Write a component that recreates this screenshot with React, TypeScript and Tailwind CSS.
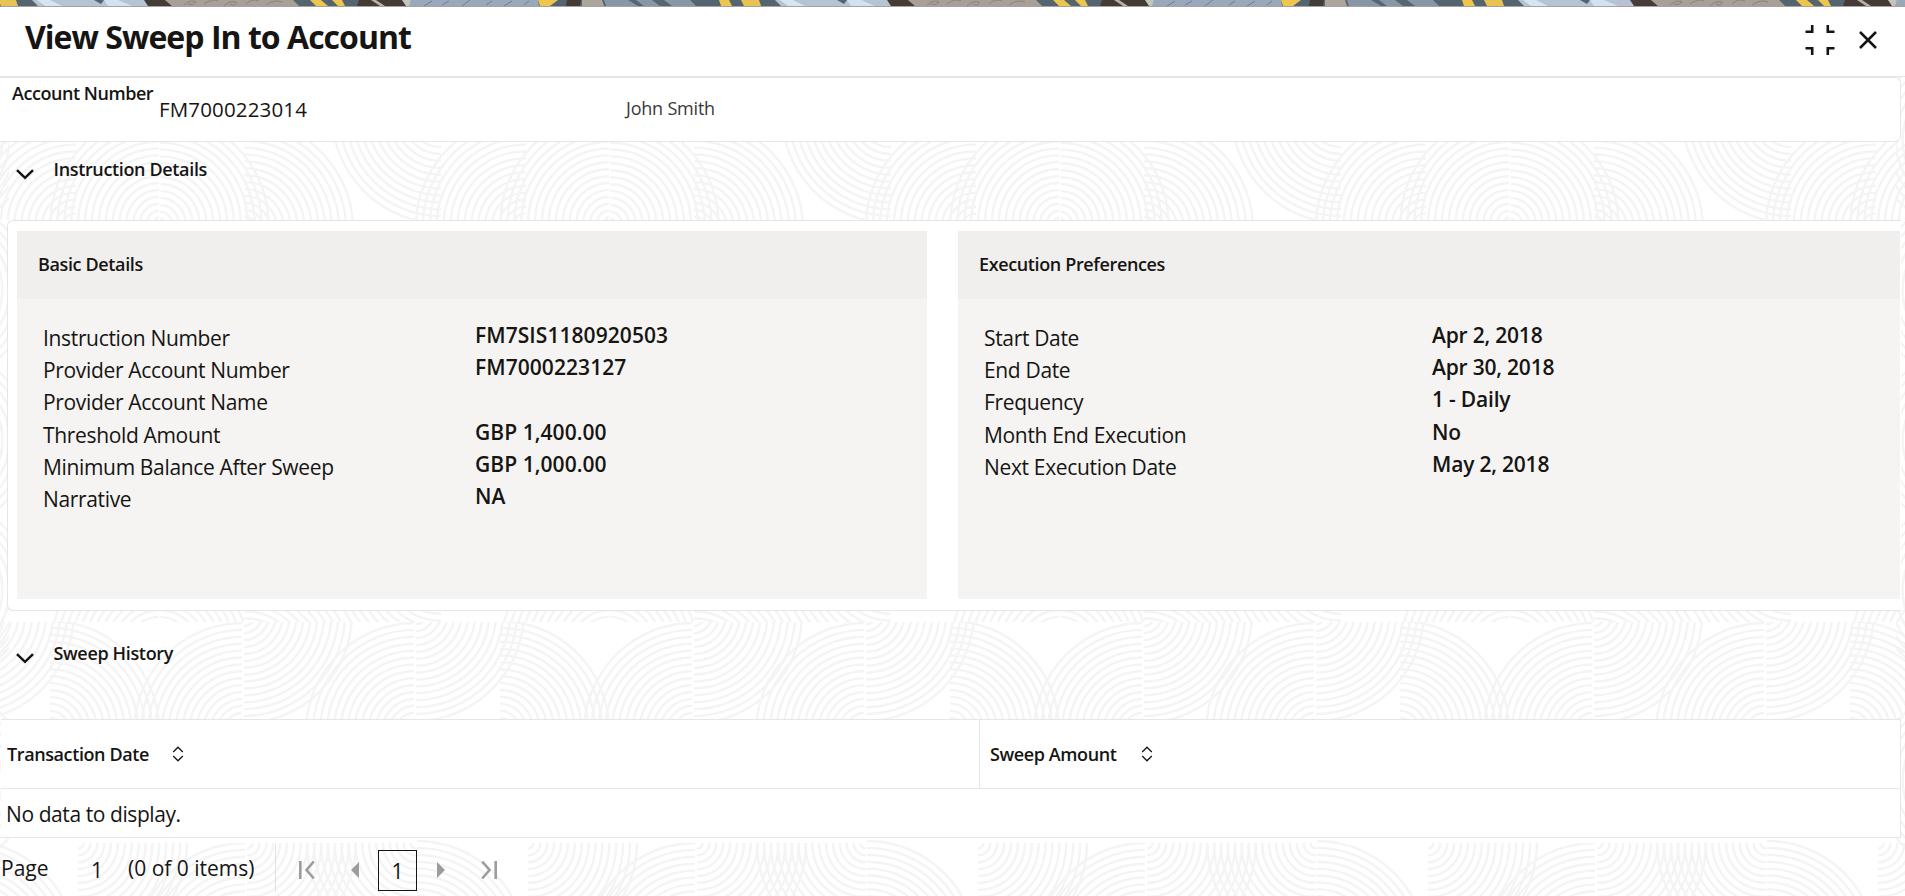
import type { ReactNode } from 'react'

interface Detail {
  label: string
  value: string
}

const basicDetails: Detail[] = [
  { label: 'Instruction Number', value: 'FM7SIS1180920503' },
  { label: 'Provider Account Number', value: 'FM7000223127' },
  { label: 'Provider Account Name', value: '' },
  { label: 'Threshold Amount', value: 'GBP 1,400.00' },
  { label: 'Minimum Balance After Sweep', value: 'GBP 1,000.00' },
  { label: 'Narrative', value: 'NA' },
]

const executionPreferences: Detail[] = [
  { label: 'Start Date', value: 'Apr 2, 2018' },
  { label: 'End Date', value: 'Apr 30, 2018' },
  { label: 'Frequency', value: '1 - Daily' },
  { label: 'Month End Execution', value: 'No' },
  { label: 'Next Execution Date', value: 'May 2, 2018' },
]

interface RingProps {
  x: number
  y: number
  w: number
  h: number
  cx: number
  cy: number
  r?: number
}

// Concentric rings cut to one cell of the backdrop
function Rings({ x, y, w, h, cx, cy, r = 109 }: RingProps) {
  const radii: number[] = []
  for (let i = r; i > 3; i -= 6.9) radii.push(i)
  return (
    <svg x={x} y={y} width={w} height={h} viewBox={`${x} ${y} ${w} ${h}`}>
      {radii.map((radius) => (
        <circle key={radius} cx={cx} cy={cy} r={radius} />
      ))}
    </svg>
  )
}

const TILES = [-450, 0, 450, 900, 1350, 1800]

function Backdrop() {
  return (
    <svg
      className="absolute inset-0 -z-10"
      width="1905"
      height="896"
      fill="none"
      stroke="#f4f4f4"
      strokeWidth="2.4"
    >
      {TILES.map((t) => (
        <g key={t}>
          {/* arches */}
          <Rings x={t + 48} y={142} w={111} h={78} cx={t + 159.5} cy={223} />
          <Rings x={t + 160.5} y={142} w={111} h={78} cx={t + 159.5} cy={224} />
          <Rings x={t - 36} y={142} w={112} h={78} cx={t + 75} cy={226} />
          <Rings x={t + 244} y={142} w={111} h={78} cx={t + 244} cy={229} />
          <Rings x={t + 330} y={142} w={111} h={78} cx={t + 441} cy={114} />
          {/* band above the second seam */}
          <Rings x={t + 48} y={610} w={111} h={12} cx={t + 159.5} cy={650} />
          <Rings x={t + 160.5} y={610} w={84} h={12} cx={t + 159.5} cy={650} />
          <Rings x={t + 244} y={610} w={111} h={12} cx={t + 244} cy={672} />
          <Rings x={t + 330} y={610} w={111} h={12} cx={t + 441} cy={560} />
          {/* waves */}
          <Rings x={t + 132} y={622} w={110} h={97} cx={t + 243} cy={732} />
          <Rings x={t + 244} y={622} w={111} h={97} cx={t + 243} cy={614} />
          <Rings x={t + 304} y={622} w={110} h={97} cx={t + 415} cy={732} />
          <Rings x={t + 416} y={622} w={111} h={97} cx={t + 415} cy={612} />
          <Rings x={t + 500} y={622} w={111} h={97} cx={t + 500} cy={730} />
          {/* bottom row */}
          <Rings x={t + 247} y={843} w={112} h={53} cx={t + 247} cy={843} />
          <Rings x={t + 306} y={843} w={110} h={53} cx={t + 416} cy={843} />
          <Rings x={t + 417} y={840} w={110} h={56} cx={t + 417} cy={950} />
          <Rings x={t + 528} y={843} w={110} h={53} cx={t + 528} cy={843} />
          <Rings x={t + 585} y={843} w={110} h={53} cx={t + 695} cy={952} />
        </g>
      ))}
      {/* gutters */}
      {[140, 290, 440, 590, 780].map((cy) => (
        <g key={cy}>
          <Rings x={0} y={cy - 70} w={9} h={140} cx={-60} cy={cy} r={90} />
          <Rings x={1896} y={cy - 70} w={9} h={140} cx={1965} cy={cy} r={90} />
        </g>
      ))}
    </svg>
  )
}

interface Shard {
  color: string
  points: string
}

const shards: Shard[] = [
  { color: '#e9c254', points: '-2,0 16,0 18,6 1,6' },
  { color: '#b7c3d3', points: '32,0 146,0 152,6 38,6' },
  { color: '#d9e4f3', points: '37,0 50,0 62,6 45,6' },
  { color: '#54646e', points: '94,0 104,0 101,4' },
  { color: '#d5e1f3', points: '104,0 118,0 132,6 108,6' },
  { color: '#453c37', points: '144,0 165,0 172,6 148,6' },
  { color: '#a8a097', points: '165,0 293,0 299,6 172,6' },
  { color: '#edc64f', points: '310,0 321,0 328,6 316,6' },
  { color: '#edc64f', points: '332,0 342,0 345,6 338,6' },
  { color: '#443b36', points: '359,0 402,0 408,6 357,6' },
  { color: '#b9b0a6', points: '371,0 376,0 385,6 380,6' },
  { color: '#c4c6bd', points: '402,0 411,0 410,6 406,6' },
  { color: '#9aa8bc', points: '411,0 538,0 539,6 409,6' },
  { color: '#edc64f', points: '538,0 558,0 550,6 540,6' },
  { color: '#443b36', points: '567,0 581,0 580,6 566,6' },
  { color: '#ada59c', points: '582,0 602,0 604,6 582,6' },
  { color: '#8996a8', points: '604,0 690,0 696,6 606,6' },
  { color: '#566772', points: '628,0 636,0 644,6 638,6' },
  { color: '#566772', points: '652,0 664,0 672,6 660,6' },
  { color: '#edc64f', points: '719,0 729,0 732,6 721,6' },
]

function ArtStrip() {
  return (
    <svg className="block h-1.5 w-full shrink-0 bg-[#54656f]" viewBox="0 0 1905 6">
      {[0, 743, 1486].map((dx) => (
        <g key={dx} transform={`translate(${dx} 0)`}>
          {shards.map((s) => (
            <polygon key={s.points} fill={s.color} points={s.points} />
          ))}
          <path
            d="M184 5q7-6 12-3q-3 4-8 2M204 4q8-6 14-3M224 6q6-6 12-4q0 5-6 2M246 4q6-6 13-3M266 5q8-6 16-3"
            fill="none"
            stroke="#8a837c"
          />
          <path d="M424 6l8-5M442 5l7-4M462 6l8-6M486 5l6-4M504 6l8-5M524 5l5-4" stroke="#6f7f93" />
        </g>
      ))}
    </svg>
  )
}

function ChevronDown() {
  return (
    <svg width="18" height="11" viewBox="0 0 18 11" fill="none" stroke="#161513" strokeWidth="2.5">
      <path d="M1 1.200l8 7.600l8-7.600" />
    </svg>
  )
}

function SortIcon() {
  return (
    <svg width="12" height="16" viewBox="0 0 12 16" fill="none" stroke="#161513" strokeWidth="1.3">
      <path d="M1.200 6L6 1.200L10.800 6M1.200 10L6 14.800L10.800 10" />
    </svg>
  )
}

interface PanelProps {
  title: string
  width: string
  labelWidth: string
  valueClass: string
  items: Detail[]
}

function Panel({ title, width, labelWidth, valueClass, items }: PanelProps) {
  return (
    <div className={`bg-[#f5f4f2] ${width}`}>
      <h3 className="h-[68px] bg-[#f0efed] pl-[21px] text-[18px] leading-[66px] font-semibold tracking-[-0.37px]">
        {title}
      </h3>
      <dl className="pt-[23px] pl-[26px]">
        {items.map((item) => (
          <div key={item.label} className="flex h-[32.2px]">
            <dt className={`text-[21px] leading-[32px] tracking-[-0.34px] ${labelWidth}`}>{item.label}</dt>
            <dd className={`text-[21px] leading-[26px] font-semibold ${valueClass}`}>{item.value}</dd>
          </div>
        ))}
      </dl>
    </div>
  )
}

function SectionTitle({ children, className }: { children: ReactNode; className: string }) {
  return (
    <div className={`flex shrink-0 items-start pl-[15.500px] ${className}`}>
      <div className="pt-[12px]">
        <ChevronDown />
      </div>
      <h2 className="pl-[20px] text-[18px] leading-6 font-semibold tracking-[-0.35px]">{children}</h2>
    </div>
  )
}

export default function App() {
  return (
    <div className="relative isolate flex h-[896px] w-[1905px] flex-col overflow-hidden bg-white font-['Open_Sans','Noto_Sans',sans-serif] text-[#161513]">
      <Backdrop />
      <ArtStrip />

      <header className="flex h-[71px] shrink-0 justify-between border-t border-b border-t-[#a5a3a1] border-b-[#e6e6e5] bg-white pr-[28px] pl-[25px]">
        <h1 className="text-[32px] leading-[60px] font-bold tracking-[-0.97px]">View Sweep In to Account</h1>
        <div className="flex items-start gap-[24px] pt-[18px]">
          <svg width="30" height="30" viewBox="0 0 30 30" fill="none" stroke="#161513" strokeWidth="2.6">
            <path d="M0.500 6.700H7.200V0M29.500 6.700H22.800V0M0.500 23.300H7.200V30M29.500 23.300H22.800V30" />
          </svg>
          <svg className="mt-[6px]" width="18" height="18" viewBox="0 0 18 18" fill="none" stroke="#161513" strokeWidth="2.5">
            <path d="M1 1l16 16M17 1L1 17" />
          </svg>
        </div>
      </header>

      <div className="flex h-[65px] w-[1901px] shrink-0 rounded-r-md border border-l-0 border-[#e6e6e5] bg-white pl-3">
        <div className="w-[147px] pt-[3px] text-[18px] leading-6 font-semibold tracking-[-0.45px]">Account Number</div>
        <div className="w-[467px] pt-[17px] text-[20.500px] leading-7 tracking-[0.15px]">FM7000223014</div>
        <div className="pt-[18px] text-[18px] leading-6 tracking-[-0.2px] text-[#3a3937]">John Smith</div>
      </div>

      <SectionTitle className="h-[78px] pt-[15px]">Instruction Details</SectionTitle>

      <section className="mr-[4px] ml-[7px] flex h-[391px] shrink-0 gap-[31px] rounded-l-md border border-r-0 border-[#e6e6e5] bg-white pt-[10px] pr-px pb-[11px] pl-[9px]">
        <Panel
          title="Basic Details"
          width="w-[910px] shrink-0"
          labelWidth="w-[432px]"
          valueClass="tracking-[0.06px]"
          items={basicDetails}
        />
        <Panel
          title="Execution Preferences"
          width="flex-1"
          labelWidth="w-[448px]"
          valueClass="tracking-[-0.2px]"
          items={executionPreferences}
        />
      </section>

      <SectionTitle className="h-[108px] pt-[29.500px]">Sweep History</SectionTitle>

      <section className="ml-px w-[1900px] shrink-0 border border-l-0 border-[#e6e6e5] bg-white">
        <div className="flex h-[69px] border-b border-[#e6e6e5] text-[18px] leading-[68px] font-semibold tracking-[-0.4px]">
          <div className="flex w-[979px] items-center border-r border-[#e6e6e5] pl-[6px]">
            <span className="w-[165px]">Transaction Date</span>
            <SortIcon />
          </div>
          <div className="flex items-center pl-[10px]">
            <span className="w-[151px]">Sweep Amount</span>
            <SortIcon />
          </div>
        </div>
        <div className="h-12 pl-[5px] text-[21px] leading-[50px] tracking-[-0.42px]">No data to display.</div>
      </section>

      <footer className="flex h-[58px] shrink-0 items-start pl-px text-[21px]">
        <span className="w-[90px] pt-[14px] leading-8">Page</span>
        <span className="w-[37px] pt-[16px] leading-8">1</span>
        <span className="w-[147px] pt-[14px] leading-8">(0 of 0 items)</span>
        <div className="mt-[6px] h-[48px] w-px bg-[#e0e0df]" />
        <div className="flex items-start pl-[23px]">
          <svg className="mt-[22px]" width="16" height="20" viewBox="0 0 16 20" fill="none" stroke="#9d9c9a" strokeWidth="2.6">
            <path d="M1.300 1V19M14.800 1.500L7.500 10L14.800 18.500" />
          </svg>
          <svg className="mt-[24px] ml-[36px]" width="8" height="16" viewBox="0 0 8 16" fill="#9d9c9a">
            <path d="M8 0V16L0 8Z" />
          </svg>
          <div className="mt-[12px] ml-[19px] h-[41px] w-[39px] border border-[#161513] text-center leading-[40px]">
            1
          </div>
          <svg className="mt-[24px] ml-[20px]" width="8" height="16" viewBox="0 0 8 16" fill="#9d9c9a">
            <path d="M0 0V16L8 8Z" />
          </svg>
          <svg className="mt-[22px] ml-[36px]" width="16" height="20" viewBox="0 0 16 20" fill="none" stroke="#9d9c9a" strokeWidth="2.6">
            <path d="M14.700 1V19M1.200 1.500L8.500 10L1.200 18.500" />
          </svg>
        </div>
      </footer>
    </div>
  )
}
